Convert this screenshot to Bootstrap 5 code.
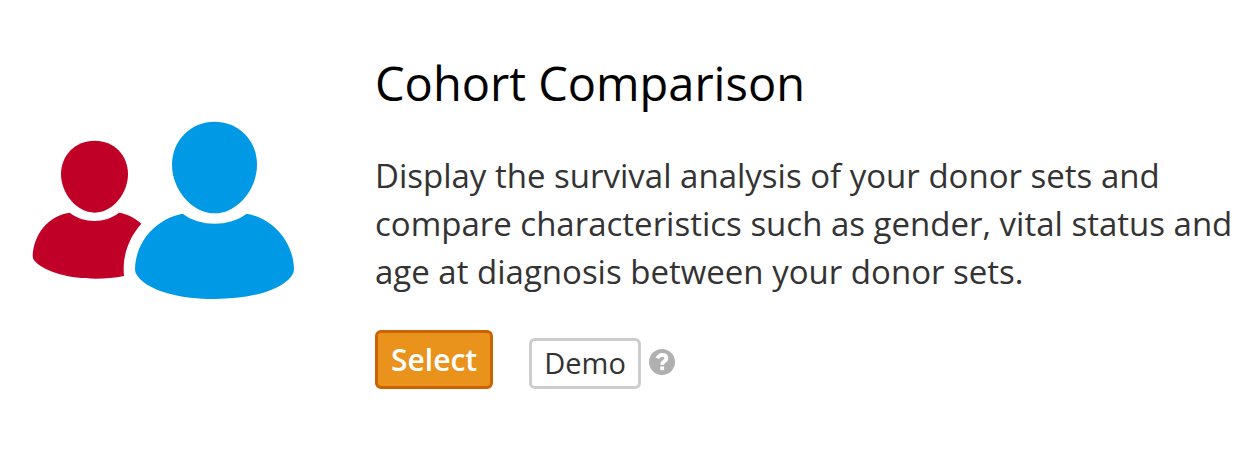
<!DOCTYPE html>
<html lang="en">
<head>
<meta charset="utf-8">
<meta name="viewport" content="width=device-width, initial-scale=1">
<title>Cohort Comparison</title>
<link href="https://cdn.jsdelivr.net/npm/bootstrap@5.3.0/dist/css/bootstrap.min.css" rel="stylesheet">
<style>
body{font-family:"Open Sans",sans-serif;color:#333;background:#fff}
.tool{padding:55px 0 64px 32px;gap:80px}
.tool-icon{width:263px;height:180px;margin-top:65px}
.tool h1{font-size:47px;line-height:56px;font-weight:400;color:#000;margin-bottom:41px}
.tool p{font-size:33px;line-height:48px;margin-bottom:34px}
.btn-pick,.btn-demo{line-height:40px;border-width:3px;border-radius:6px}
.btn-pick{--bs-btn-color:#fff;--bs-btn-bg:#e9931c;--bs-btn-border-color:#cc6200;--bs-btn-hover-color:#fff;--bs-btn-hover-bg:#d98210;--bs-btn-hover-border-color:#cc6200;padding:7px 13px 6px;font-size:30px;font-weight:600}
.btn-demo{--bs-btn-color:#333;--bs-btn-bg:#fff;--bs-btn-border-color:#ccc;--bs-btn-hover-bg:#eee;--bs-btn-hover-border-color:#bbb;padding:2px 12px 3px;font-size:29px;margin-left:36px}
.help{margin-left:8px;margin-bottom:14px}
</style>
<script src="https://cdn.jsdelivr.net/npm/bootstrap@5.3.0/dist/js/bootstrap.bundle.min.js"></script>
</head>
<body>
<main class="tool d-flex align-items-start">
<svg class="tool-icon flex-shrink-0" viewBox="36 30 789 540" aria-hidden="true">
<g fill="#c00026">
<path d="M224 92C282 92 324 135 324 193C324 250 278 308 224 308C170 308 123 250 123 193C123 135 166 92 224 92Z"/>
<path d="M149 308C190 341 256 341 297 308C322 312 344 323 364 341C327 383 306 436 312 498C215 517 91 502 44 453Q38 446 38 438C41 372 85 317 149 308Z"/>
</g>
<g fill="#0099e5">
<path d="M584 35C656 35 711 91 711 164C711 238 652 310 584 310C515 310 456 238 456 164C456 91 512 35 584 35Z"/>
<path d="M488 311C540 351 628 351 680 311C765 327 822 402 822 480Q822 490 813 500C777 545 682 567 584 567C485 567 390 545 354 500Q345 490 345 480C345 402 402 327 488 311Z"/>
</g>
</svg>
<div class="flex-grow-1">
<h1>Cohort Comparison</h1>
<p>Display the survival analysis of your donor sets and compare characteristics such as gender, vital status and age at diagnosis between your donor sets.</p>
<div class="d-flex align-items-end">
<button type="button" class="btn btn-pick">Select</button>
<button type="button" class="btn btn-demo">Demo</button>
<svg class="help" width="26" height="26" viewBox="0 0 26 26" role="img" aria-label="Help">
<circle cx="13" cy="13" r="13" fill="#b0b0b0"/>
<path d="M8.400 9.400Q9.800 5.900 13.200 5.900Q17.300 5.900 17.300 9.300Q17.300 11.300 15.200 12.400Q13.200 13.400 13.200 15.700" fill="none" stroke="#fff" stroke-width="3.800"/>
<path d="M11.300 17.400h3.800v3.800h-3.800z" fill="#fff"/>
</svg>
</div>
</div>
</main>
</body>
</html>
